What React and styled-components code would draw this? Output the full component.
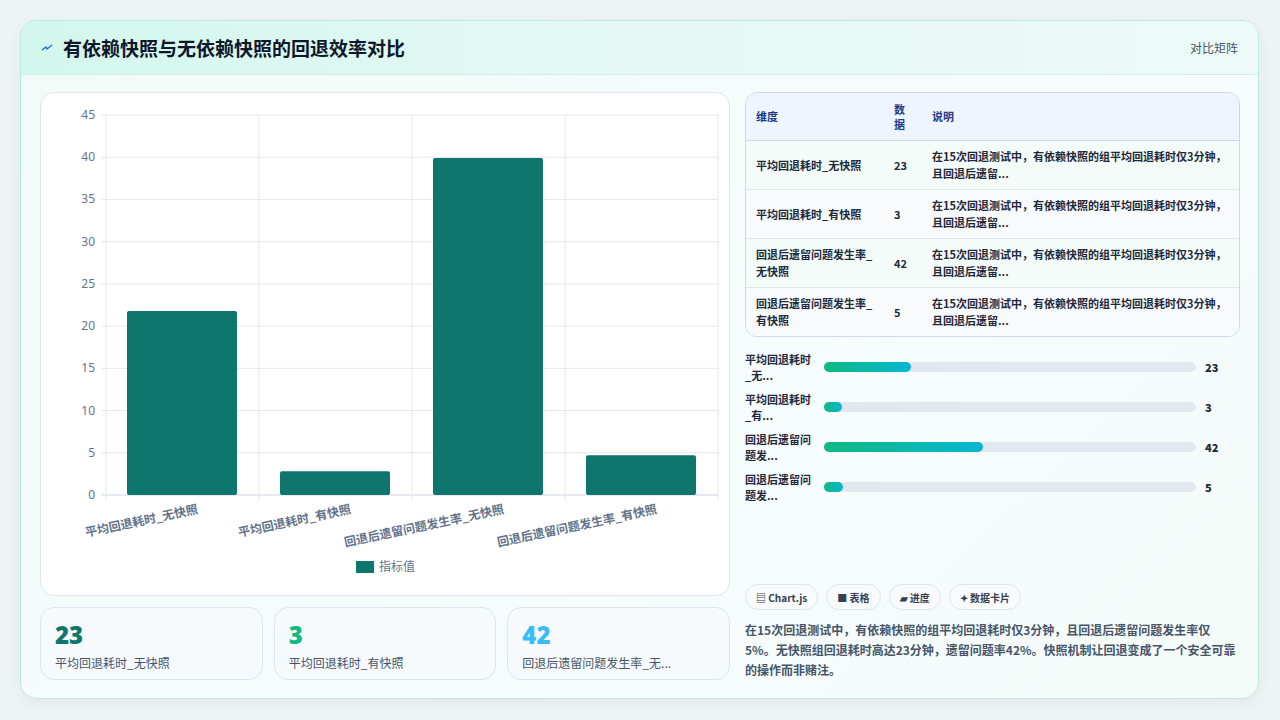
import React from "react";
import styled, { createGlobalStyle } from "styled-components";

const G = createGlobalStyle`
  html,body{margin:0;padding:0;background:#eef3f3;}
  body{font-family:"Noto Sans CJK SC","Noto Sans",sans-serif;width:1280px;height:720px;overflow:hidden;}
`;
const Page = styled.div`padding:20px 21px 20px 20px;`;
const Card = styled.div`
  width:1239px;height:679px;box-sizing:border-box;border:1px solid #b9eadc;border-radius:16px;
  background:linear-gradient(135deg,#f1fbf7 0%,#f7fcfd 60%,#f3fbf8 100%);overflow:hidden;
  box-shadow:0 4px 16px rgba(0,0,0,0.05);display:flex;flex-direction:column;
`;
const Header = styled.div`
  height:55px;box-sizing:border-box;border-bottom:1px solid #cfeee6;display:flex;align-items:center;
  justify-content:space-between;padding:0 20px 0 20px;
  background:linear-gradient(90deg,#d3f7ec,#e4f9f4 50%,#edfaf8);
`;
const Title = styled.h1`margin:0;font-size:19px;font-weight:700;color:#0f172a;display:flex;align-items:center;gap:10px;`;
const Tag = styled.span`font-size:12px;color:#475569;`;
const Body = styled.div`flex:1;display:flex;gap:15px;padding:17px 18px 18px 19px;`;
const Left = styled.div`width:690px;display:flex;flex-direction:column;gap:11px;`;
const ChartCard = styled.div`height:504px;box-sizing:border-box;background:#fff;border:1px solid #dbe7ef;border-radius:14px;`;
const Stats = styled.div`display:flex;gap:11px;`;
const Stat = styled.div`flex:1;height:73px;box-sizing:border-box;border:1px solid #d9e6f2;border-radius:14px;background:#f7fafd;padding:13px 14px;`;
const Num = styled.div`font-size:24px;font-weight:800;color:${p=>p.c};line-height:28px;font-family:"Open Sans","Noto Sans CJK SC",sans-serif;`;
const Lbl = styled.div`font-size:12px;color:#475569;margin-top:5px;white-space:nowrap;overflow:hidden;text-overflow:ellipsis;`;
const Right = styled.div`width:496px;display:flex;flex-direction:column;`;
const Table = styled.table`width:100%;border-collapse:separate;border-spacing:0;border:1px solid #cdd9e8;border-radius:12px;overflow:hidden;font-size:11px;color:#1e293b;font-weight:700;`;
const Th = styled.th`background:#eef5ff;color:#1e3a8a;text-align:left;font-weight:700;height:47px;padding:0 10px;border-bottom:1px solid #cdd9e8;line-height:15px;`;
const Td = styled.td`height:48px;padding:0 10px;line-height:17px;border-top:${p=>p.first?"none":"1px solid #dde6ef"};background:${p=>p.alt?"#f8fafc":"#f3fcf8"};`;
const Bars = styled.div`display:flex;flex-direction:column;gap:8px;margin-top:14px;`;
const BarRow = styled.div`display:flex;align-items:center;height:32px;`;
const BarLbl = styled.div`width:79px;font-size:11px;font-weight:700;color:#1e293b;line-height:16px;`;
const Track = styled.div`width:372px;height:10px;border-radius:5px;background:#e2e8f0;`;
const Fill = styled.div`height:100%;border-radius:5px;background:linear-gradient(90deg,#10b981,#06b6d4);`;
const BarVal = styled.div`margin-left:9px;font-size:11px;font-weight:800;color:#1e293b;`;
const Chips = styled.div`display:flex;gap:8px;margin-top:auto;`;
const Chip = styled.span`height:26px;box-sizing:border-box;border:1px solid #dde6ee;border-radius:13px;background:#f8fafc;padding:0 10px;display:flex;align-items:center;gap:4px;font-size:10px;font-weight:700;color:#334155;`;
const Para = styled.p`margin:10px 0 0;font-size:12px;line-height:20px;color:#475569;font-weight:700;`;

const ox=40, oy=93;
const Chart = () => {
  const x0=105-ox, x1=717-ox, y0=115-oy, y1=495-oy;
  const ticks=[0,5,10,15,20,25,30,35,40,45];
  const bars=[{v:21.8,l:"平均回退耗时_无快照"},{v:2.8,l:"平均回退耗时_有快照"},{v:39.9,l:"回退后遗留问题发生率_无快照"},{v:4.7,l:"回退后遗留问题发生率_有快照"}];
  const gw=(x1-x0)/4;
  return (
    <svg width="688" height="502" style={{display:"block"}}>
      {ticks.map(t=>{const y=y1-(t/45)*(y1-y0);return <g key={t}>
        <line x1={x0-5} x2={x1} y1={y} y2={y} stroke={t===0?"#cbd5e1":"#e5e7eb"}/>
        <text x={x0-11} y={y+4} fontSize="12" fill="#64748b" textAnchor="end" fontFamily="Noto Sans, sans-serif">{t}</text></g>})}
      {[0,1,2,3,4].map(i=><line key={i} x1={x0+i*gw} x2={x0+i*gw} y1={y0} y2={y1+5} stroke="#e5e7eb"/>)}
      {bars.map((b,i)=>{const h=(b.v/45)*(y1-y0);const bx=x0+i*gw+21;return <g key={i}>
        <rect x={bx} y={y1-h} width={110} height={h} rx="2" fill="#0f766e"/>
        <text transform={`translate(${x0+i*gw+gw/2+16},${y1+18}) rotate(-12)`} textAnchor="end" fontSize="12" fontWeight="700" fill="#64748b" fontFamily="Noto Sans CJK SC, sans-serif">{b.l}</text></g>})}
      <rect x={315} y={468} width={18} height={12} fill="#0f766e"/>
      <text x={338} y={478} fontSize="12" fill="#64748b" fontFamily="Noto Sans CJK SC, sans-serif">指标值</text>
    </svg>
  );
};

const rows=[["平均回退耗时_无快照","23"],["平均回退耗时_有快照","3"],["回退后遗留问题发生率_无快照","42"],["回退后遗留问题发生率_有快照","5"]];
const desc="在15次回退测试中，有依赖快照的组平均回退耗时仅3分钟，且回退后遗留...";
const prog=[["平均回退耗时_无...",23],["平均回退耗时_有...",3],["回退后遗留问题发...",42],["回退后遗留问题发...",5]];

export default function App(){
  return <Page><G/><Card>
    <Header>
      <Title><svg width="12" height="10" viewBox="0 0 12 10"><path d="M1 7 L5 4 L6 6 L11 2" stroke="#2563eb" strokeWidth="1.3" fill="none"/></svg>有依赖快照与无依赖快照的回退效率对比</Title>
      <Tag>对比矩阵</Tag>
    </Header>
    <Body>
      <Left>
        <ChartCard><Chart/></ChartCard>
        <Stats>
          <Stat><Num c="#0f766e">23</Num><Lbl>平均回退耗时_无快照</Lbl></Stat>
          <Stat><Num c="#10b981">3</Num><Lbl>平均回退耗时_有快照</Lbl></Stat>
          <Stat><Num c="#38bdf8">42</Num><Lbl>回退后遗留问题发生率_无...</Lbl></Stat>
        </Stats>
      </Left>
      <Right>
        <Table>
          <thead><tr><Th style={{width:118}}>维度</Th><Th style={{width:18}}>数据</Th><Th>说明</Th></tr></thead>
          <tbody>{rows.map((r,i)=><tr key={i}>
            <Td first={i===0} alt={i%2===1}>{r[0]}</Td><Td first={i===0} alt={i%2===1}>{r[1]}</Td><Td first={i===0} alt={i%2===1}>{desc}</Td></tr>)}</tbody>
        </Table>
        <Bars>{prog.map((p,i)=><BarRow key={i}><BarLbl>{p[0].slice(0,6)}<br/>{p[0].slice(6)}</BarLbl>
          <Track><Fill style={{width:`${Math.max(p[1]/100*372/0.98*1.0,0)}px`,minWidth:18}}/></Track><BarVal>{p[1]}</BarVal></BarRow>)}</Bars>
        <Chips><Chip>▤ Chart.js</Chip><Chip>■ 表格</Chip><Chip>▰ 进度</Chip><Chip>✦ 数据卡片</Chip></Chips>
        <Para>在15次回退测试中，有依赖快照的组平均回退耗时仅3分钟，且回退后遗留问题发生率仅5%。无快照组回退耗时高达23分钟，遗留问题率42%。快照机制让回退变成了一个安全可靠的操作而非赌注。</Para>
      </Right>
    </Body>
  </Card></Page>;
}
